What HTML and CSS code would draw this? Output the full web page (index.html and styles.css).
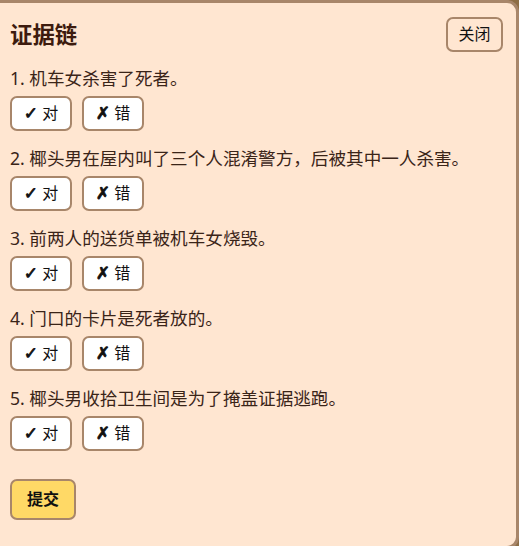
FILE: index.html
```html
<!DOCTYPE html>
<html lang="zh">
<head>
<meta charset="utf-8">
<title>证据链</title>
<link rel="stylesheet" href="styles.css">
</head>
<body>
<div class="panel">
  <div class="header">
    <h2 class="title">证据链</h2>
    <button class="btn close">关闭</button>
  </div>
  <div class="item">
    <p class="q">1. 机车女杀害了死者。</p>
    <div class="choices"><button class="btn choice"><span class="mark">✓</span> 对</button><button class="btn choice"><span class="mark">✗</span> 错</button></div>
  </div>
  <div class="item">
    <p class="q">2. 椰头男在屋内叫了三个人混淆警方，后被其中一人杀害。</p>
    <div class="choices"><button class="btn choice"><span class="mark">✓</span> 对</button><button class="btn choice"><span class="mark">✗</span> 错</button></div>
  </div>
  <div class="item">
    <p class="q">3. 前两人的送货单被机车女烧毁。</p>
    <div class="choices"><button class="btn choice"><span class="mark">✓</span> 对</button><button class="btn choice"><span class="mark">✗</span> 错</button></div>
  </div>
  <div class="item">
    <p class="q">4. 门口的卡片是死者放的。</p>
    <div class="choices"><button class="btn choice"><span class="mark">✓</span> 对</button><button class="btn choice"><span class="mark">✗</span> 错</button></div>
  </div>
  <div class="item">
    <p class="q">5. 椰头男收拾卫生间是为了掩盖证据逃跑。</p>
    <div class="choices"><button class="btn choice"><span class="mark">✓</span> 对</button><button class="btn choice"><span class="mark">✗</span> 错</button></div>
  </div>
  <button class="btn submit">提交</button>
</div>
</body>
</html>
```
FILE: styles.css
```css
html, body {
  margin: 0;
  padding: 0;
  height: 100%;
  overflow: hidden;
}
body {
  background: #8d6d45;
  font-family: "Noto Sans", "Noto Sans CJK SC", sans-serif;
  color: #3a2418;
}
.panel {
  box-sizing: border-box;
  width: 539px;
  height: 549px;
  margin-left: -20px;
  border: 3px solid #a8866a;
  border-radius: 12px;
  background: #ffe6d1;
  padding: 14px 13px 0 27px;
}
.header {
  display: flex;
  justify-content: space-between;
  align-items: center;
  margin-bottom: 13px;
}
.title {
  margin: 0;
  font-size: 22.4px;
  line-height: 32px;
  font-weight: 700;
  color: #3d1b0e;
}
.btn {
  font-family: "Noto Sans", "Noto Sans CJK SC", sans-serif;
  font-size: 16px;
  line-height: 23px;
  border: 2px solid #a8866a;
  border-radius: 7px;
  color: #111;
  cursor: pointer;
}
.close {
  background: #ffe6d1;
  padding: 4px 10px;
  height: 35px;
  width: 57px;
}
.item {
  margin-bottom: 14px;
}
.q {
  margin: 0 0 5px;
  font-size: 17.6px;
  line-height: 26px;
  color: #3a2418;
}
.choices {
  display: flex;
  gap: 10px;
}
.choice {
  background: #fff;
  padding: 4px 10px;
  width: 62px;
  height: 35px;
}
.mark {
  font-family: "DejaVu Sans", sans-serif;
  font-size: 17px;
  -webkit-text-stroke: 0.8px #111;
}
.submit {
  margin-top: 14px;
  background: #ffd966;
  font-weight: 700;
  line-height: 17px;
  padding: 10px 15px;
  height: 41px;
  width: 66px;
}
```
